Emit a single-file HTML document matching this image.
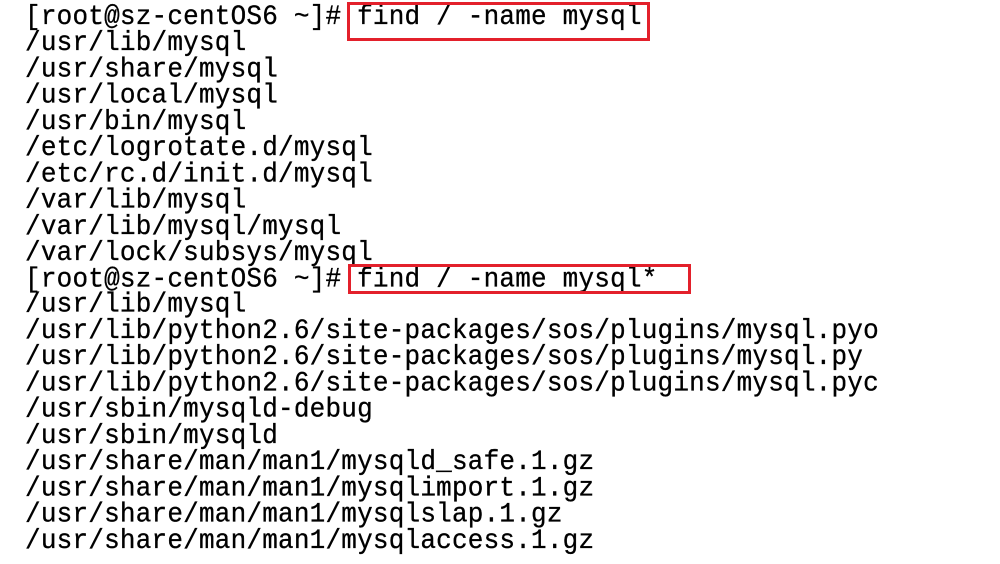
<!DOCTYPE html>
<html><head><meta charset="utf-8"><style>
html,body{margin:0;padding:0;background:#fff;width:1000px;height:564px;overflow:hidden;position:relative}
pre{position:absolute;left:25px;top:4px;margin:0;font-family:"Liberation Mono",monospace;font-size:26px;line-height:24.95px;color:#000;letter-spacing:0.21px;-webkit-text-stroke:0.3px #000;transform:scaleY(1.05);transform-origin:0 0}
.box{position:absolute;border:3px solid #e3202b;box-sizing:border-box}
</style></head><body>
<pre>[root@sz-centOS6 ~]# find / -name mysql
/usr/lib/mysql
/usr/share/mysql
/usr/local/mysql
/usr/bin/mysql
/etc/logrotate.d/mysql
/etc/rc.d/init.d/mysql
/var/lib/mysql
/var/lib/mysql/mysql
/var/lock/subsys/mysql
[root@sz-centOS6 ~]# find / -name mysql*
/usr/lib/mysql
/usr/lib/python2.6/site-packages/sos/plugins/mysql.pyo
/usr/lib/python2.6/site-packages/sos/plugins/mysql.py
/usr/lib/python2.6/site-packages/sos/plugins/mysql.pyc
/usr/sbin/mysqld-debug
/usr/sbin/mysqld
/usr/share/man/man1/mysqld_safe.1.gz
/usr/share/man/man1/mysqlimport.1.gz
/usr/share/man/man1/mysqlslap.1.gz
/usr/share/man/man1/mysqlaccess.1.gz</pre>
<div class="box" style="left:347px;top:2px;width:303px;height:39px"></div>
<div class="box" style="left:348px;top:264px;width:343px;height:30px"></div>
</body></html>
